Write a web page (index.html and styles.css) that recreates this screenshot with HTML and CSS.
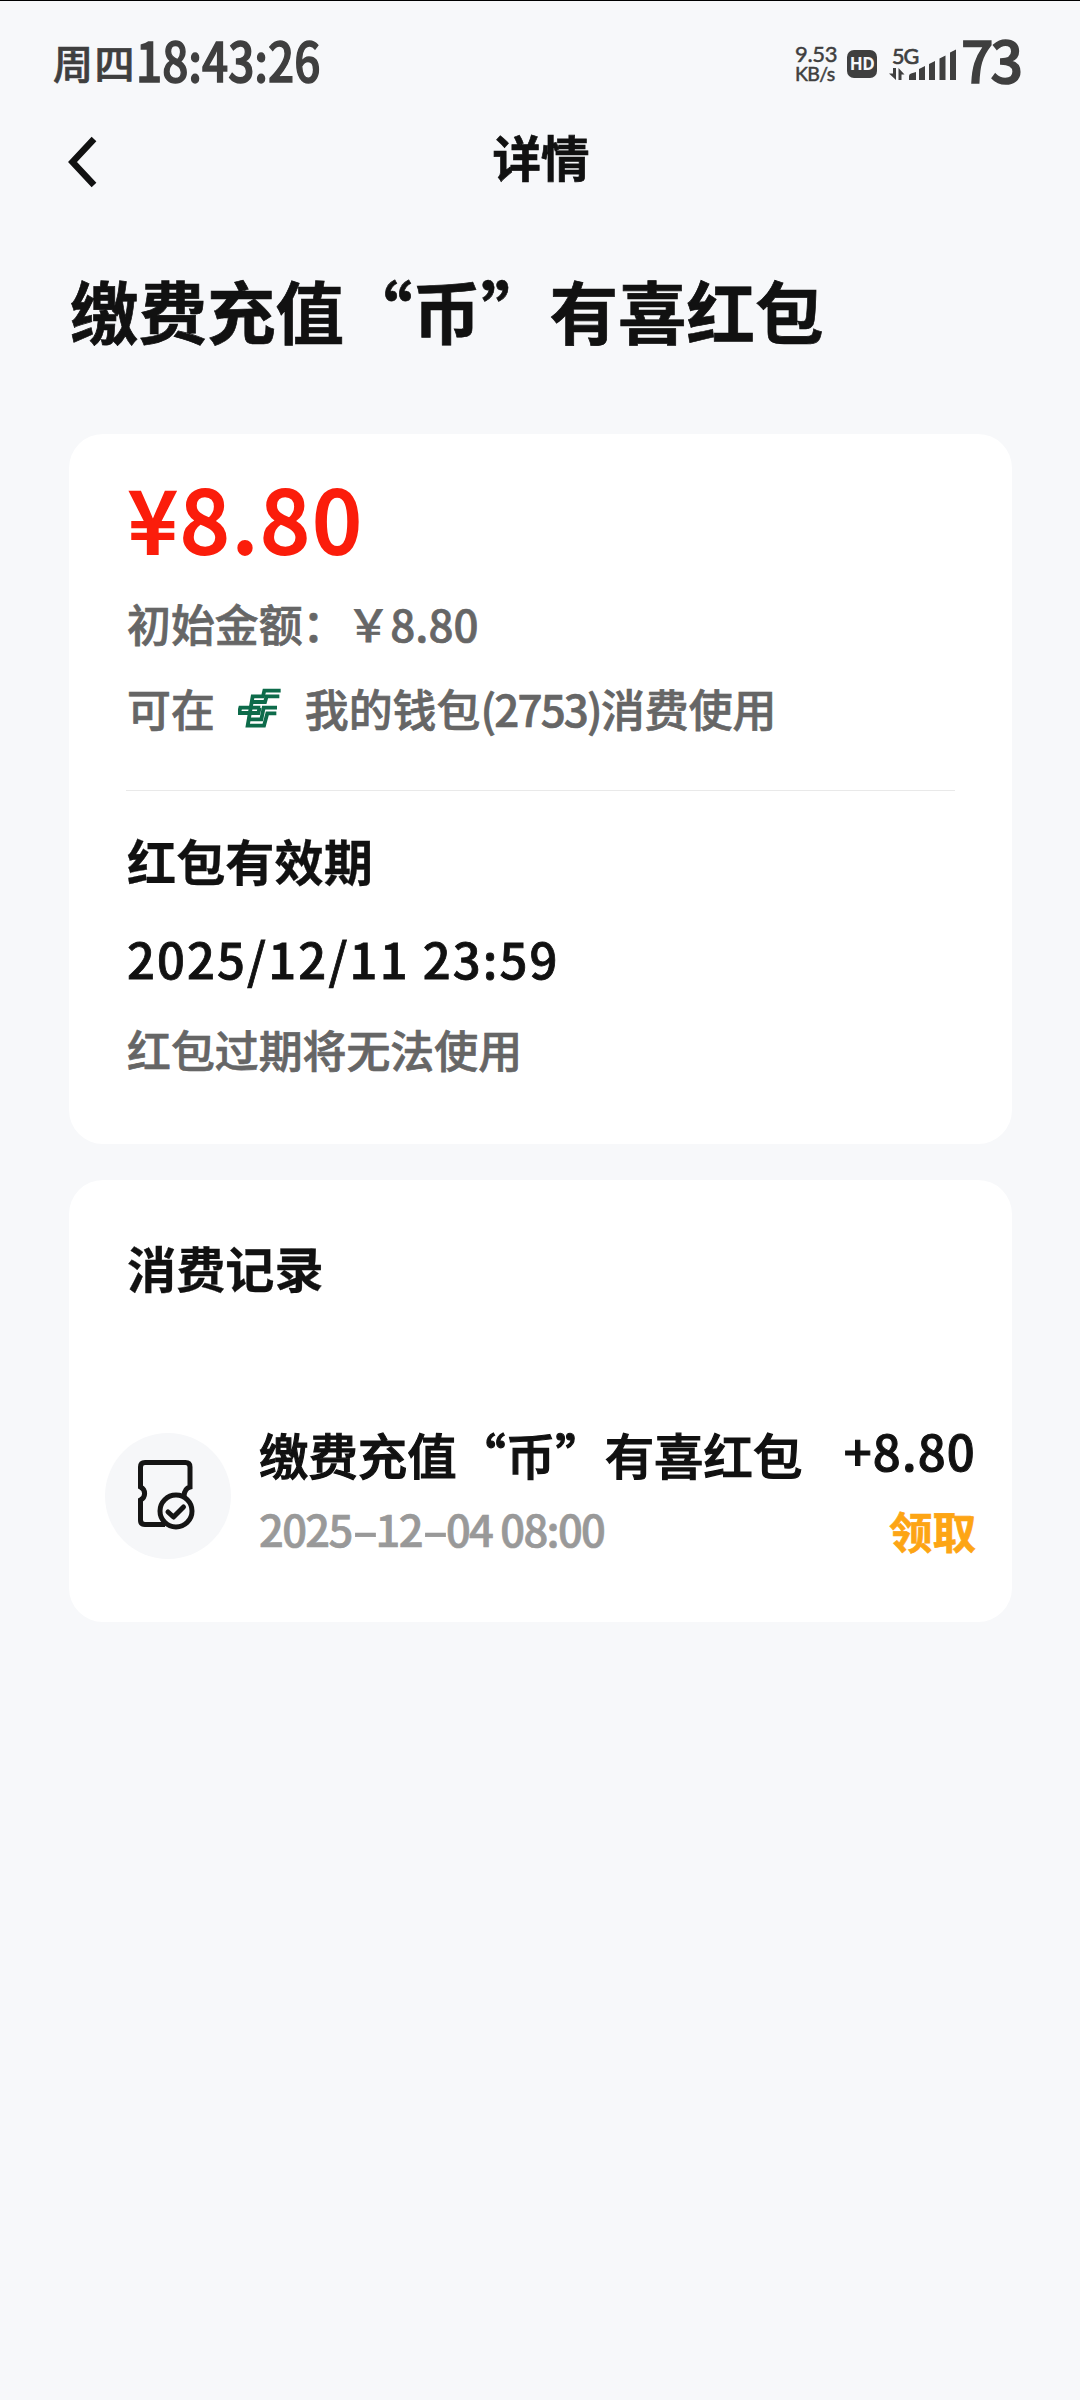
FILE: index.html
```html
<!DOCTYPE html>
<html lang="zh-CN">
<head>
<meta charset="utf-8">
<title>详情</title>
<link rel="stylesheet" href="styles.css">
</head>
<body>
<header class="status">
  <div class="clock"><span class="day">周四</span><span class="time">18:43:26</span></div>
  <div class="indicators">
    <div class="speed"><span>9.53</span><span>KB/s</span></div>
    <div class="hd">HD</div>
    <div class="signal">
      <span class="net">5G</span>
      <svg width="68" height="34" viewBox="0 0 68 34" fill="#3f3f3f">
        <path d="M4 22h3v12L0 27.500h4zM9.500 34V22l6 6.500h-3V34z"/>
        <path d="M20 34v-4q0-2 2-2.500l5-1.500v8zM30 34V23l6-3v14zM40 34V18l6-3v19zM50.500 34V12.500l6-3V34zM61 34V6.500l6-3V34z"/>
      </svg>
    </div>
    <div class="battery">73</div>
  </div>
</header>
<nav class="nav">
  <svg class="back" width="32" height="54" viewBox="0 0 32 54" fill="none" stroke="#111" stroke-width="6.500"><path d="M28 4 6.500 27 28 50"/></svg>
  <span>详情</span>
</nav>
<main>
  <h1 class="title">缴费充值“币”有喜红包</h1>
  <section class="card">
    <div class="amount">¥8.80</div>
    <div class="line initial">初始金额：￥8.80</div>
    <div class="line wallet">
      <span>可在</span>
      <svg width="44" height="40" viewBox="52 62 132 120" fill="none" stroke="#0d6b4a" stroke-width="11.500">
        <path d="M180 70H131L127 87H96L81 175H130L140 138H167"/>
        <path d="M176 87H138L133 104H94"/>
        <path d="M119 121H59L55 137H113L117 121"/>
        <path d="M169 121H129L122 156H86"/>
      </svg>
      <span>我的钱包<span class="tail">(2753)</span>消费使用</span>
    </div>
    <hr class="rule">
    <h2 class="heading">红包有效期</h2>
    <div class="expiry">2025/12/11 23:59</div>
    <div class="line note">红包过期将无法使用</div>
  </section>
  <section class="card records">
    <h2 class="heading">消费记录</h2>
    <div class="record">
      <div class="badge">
        <svg width="60" height="72" viewBox="0 0 60 72" fill="none" stroke="#151515" stroke-width="5">
          <path d="M30 64.500H10Q5.500 64.500 5.500 60V40A7.200 7.200 0 0 0 5.500 27V7Q5.500 2.500 10 2.500H50.500Q55 2.500 55 7V27Q49.500 28.500 49 36"/>
          <circle cx="41" cy="51" r="16"/>
          <path d="M33 52 38.500 57 48.500 47" stroke-linecap="round" stroke-linejoin="round"/>
        </svg>
      </div>
      <div class="info">
        <div class="name">缴费充值“币”有喜红包</div>
        <div class="when">2025<span class="dash">-</span>12<span class="dash">-</span>04 08:00</div>
      </div>
      <div class="result">
        <div class="delta">+8.80</div>
        <div class="state">领取</div>
      </div>
    </div>
  </section>
</main>
</body>
</html>
```
FILE: styles.css
```css
* { box-sizing: border-box; margin: 0; padding: 0; }
body {
  width: 1080px;
  height: 2400px;
  background: #f7f8fa;
  color: #111;
  font-family: "Noto Sans CJK SC", sans-serif;
  font-weight: 500;
  white-space: nowrap;
  -webkit-text-stroke: .7px currentColor;
}
svg { display: block; flex: none; }
.status {
  height: 112px;
  border-top: 1px solid #000;
  padding: 0 60px 0 53px;
  display: flex;
  justify-content: space-between;
  color: #3f3f3f;
}
.clock { display: flex; }
.day { font-size: 40px; line-height: 60px; margin-top: 31px; letter-spacing: 1.500px; }
.time {
  font-size: 54px;
  line-height: 60px;
  margin-top: 28px;
  transform: scaleX(.85);
  transform-origin: left center;
  width: 186px;
  -webkit-text-stroke-width: 1.500px;
}
.indicators { display: flex; align-items: flex-start; }
.speed {
  display: flex;
  flex-direction: column;
  font: 400 22px/20px Lato, sans-serif;
  width: 52px;
  margin-top: 43px;
  letter-spacing: -.3px;
  -webkit-text-stroke-width: .5px;
}
.speed span:last-child { font-size: 19.500px; line-height: 19px; letter-spacing: -.6px; }
.hd {
  width: 30px;
  height: 28px;
  margin-top: 49px;
  border-radius: 7px;
  background: #3f3f3f;
  color: #f6f8fb;
  font: 700 17px/28px "Open Sans", sans-serif;
  letter-spacing: -.5px;
  text-align: center;
  -webkit-text-stroke-width: 0;
}
.signal { width: 68px; margin-left: 12px; margin-top: 45px; display: grid; }
.signal > * { grid-area: 1 / 1; }
.net {
  font: 400 21.500px/20px Lato, sans-serif;
  letter-spacing: -1px;
  padding-left: 3px;
  -webkit-text-stroke-width: .7px;
}
.battery {
  font-size: 57px;
  line-height: 60px;
  margin: 27px 0 0 4px;
  width: 59px;
  letter-spacing: -3px;
  -webkit-text-stroke-width: 1.500px;
}
.nav {
  height: 88px;
  display: flex;
  align-items: center;
  justify-content: center;
  font-size: 48.500px;
  line-height: 88px;
  font-weight: 600;
  padding-right: 61px;
}
.back { margin-left: 66px; margin-right: auto; margin-top: 12px; }
.nav span { margin-right: auto; }
.nav::after { content: ""; width: 35px; }
main { padding: 0 68px 0 69px; }
.title {
  padding: 60px 0 74px 1px;
  font-size: 68.500px;
  line-height: 100px;
  font-weight: 700;
}
.card {
  height: 709.500px;
  padding: 32px 57px 0;
  border-radius: 34px;
  background: #fff;
}
.amount {
  color: #fb1d0b;
  font-size: 87px;
  line-height: 100px;
  letter-spacing: 2.400px;
  padding-left: 2px;
  -webkit-text-stroke-width: 1.800px;
}
.line { color: #666; font-size: 43.900px; line-height: 60px; padding-left: 1px; }
.initial { margin-top: 27px; }
.wallet { margin-top: 25px; display: flex; align-items: center; gap: 23px; }
.tail { letter-spacing: -1.800px; }
.rule { border: 0; height: 1px; background: #e9e9e9; margin-top: 52px; }
.heading { font-size: 49.200px; line-height: 60px; font-weight: 600; margin-top: 39px; padding-left: 1px; -webkit-text-stroke-width: .3px; }
.expiry { font-size: 49px; line-height: 60px; letter-spacing: 2.100px; margin-top: 38px; padding-left: 1px; -webkit-text-stroke-width: .8px; }
.note { margin-top: 31px; }
.records { height: 442px; margin-top: 36.500px; padding: 57px 36px 0; }
.records .heading { margin: 0 0 127px; padding-left: 22px; }
.record { display: flex; align-items: center; height: 144px; }
.badge {
  width: 126px;
  height: 126px;
  border-radius: 50%;
  background: #f6f7f9;
  display: flex;
  align-items: center;
  padding-left: 30px;
}
.info { margin-left: 28px; align-self: flex-start; }
.name { font-size: 49.400px; line-height: 60px; -webkit-text-stroke-width: 1.200px; }
.when { color: #999; font-size: 43.500px; line-height: 60px; margin-top: 15px; letter-spacing: -1.650px; }
.dash { display: inline-block; transform: scaleX(1.700); width: 24px; text-align: center; }
.result { margin-left: auto; align-self: flex-start; text-align: right; }
.delta { font-size: 49px; line-height: 50px; letter-spacing: 1.200px; margin-top: 1px; -webkit-text-stroke-width: 1px; }
.state { font-size: 43.500px; line-height: 60px; margin-top: 26px; color: #fda514; font-weight: 700; }
```
